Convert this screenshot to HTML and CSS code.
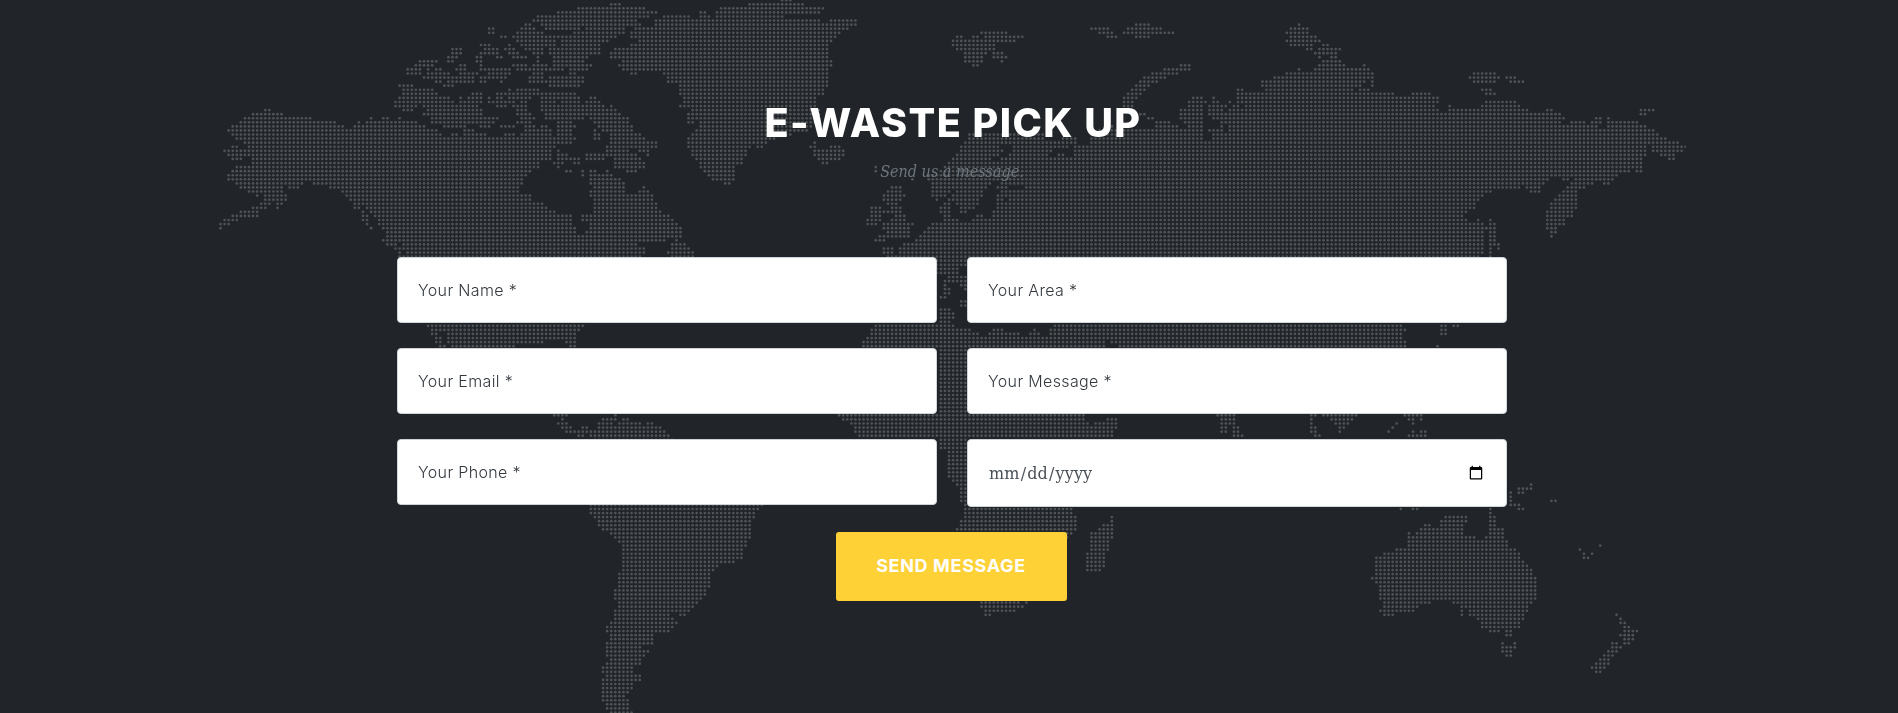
FILE: index.html
```html
<!DOCTYPE html>
<html lang="en">
<head>
<meta charset="utf-8">
<title>E-Waste Pick Up</title>
<link rel="stylesheet" href="styles.css">
</head>
<body>
<section class="contact">
  <canvas class="contact-map" id="map" width="1469" height="713"></canvas>
  <div class="container">
    <h2 class="section-heading">E-WASTE PICK UP</h2>
    <h3 class="section-subheading">Send us a message.</h3>
    <form class="contact-form">
      <div class="fields">
        <input class="field" type="text" placeholder="Your Name *">
        <input class="field" type="text" placeholder="Your Area *">
        <input class="field" type="text" placeholder="Your Email *">
        <input class="field" type="text" placeholder="Your Message *">
        <input class="field" type="text" placeholder="Your Phone *">
        <input class="field field-date" type="date">
      </div>
      <button class="send" type="button">SEND MESSAGE</button>
    </form>
  </div>
</section>
<script src="map.js"></script>
</body>
</html>
```

FILE: styles.css
```css
* { box-sizing: border-box; }

body {
  margin: 0;
  background: #212529;
  color: #212529;
  font-family: Inter, "Open Sans", sans-serif;
  overflow: hidden;
}

.contact {
  position: relative;
  height: 713px;
  padding: 96px 0 0 6px;
  background: #212529;
  overflow: hidden;
}

.contact-map {
  position: absolute;
  left: 217px;
  top: 0;
}

.container {
  position: relative;
  width: 1110px;
  margin: 0 auto;
  text-align: center;
}

.section-heading {
  margin: 0;
  padding: 3px 0 0 2px;
  font-size: 39.5px;
  line-height: 48px;
  font-weight: 800;
  letter-spacing: 1.5px;
  white-space: nowrap;
  color: #fff;
}

.section-subheading {
  margin: 13px 0 0;
  font-family: "DejaVu Serif Condensed", "DejaVu Serif", serif;
  font-size: 16px;
  line-height: 24px;
  font-style: italic;
  font-weight: 400;
  color: #6c757d;
}

.contact-form {
  display: flex;
  flex-direction: column;
  align-items: center;
  margin-top: 73px;
}

.fields {
  display: grid;
  grid-template-columns: 540px 540px;
  column-gap: 30px;
  row-gap: 25px;
  align-items: start;
  width: 1110px;
}

.field {
  width: 100%;
  height: 66px;
  padding: 20px;
  border: 1px solid #ced4da;
  border-radius: 4px;
  background: #fff;
  color: #495057;
  font-family: Inter, "Open Sans", sans-serif;
  font-size: 16px;
  font-weight: 300;
  letter-spacing: 0.35px;
}

.field::placeholder { color: #32383e; opacity: 1; }

.field-date {
  height: 68px;
  font-family: "DejaVu Serif", serif;
  font-weight: 400;
  letter-spacing: 0.15px;
}

.send {
  width: 231px;
  height: 69px;
  margin: 25px 2px 0 0;
  padding: 0 0 2px;
  border: 0;
  border-radius: 3px;
  background: #fed136;
  color: #fff;
  font-family: Inter, "Open Sans", sans-serif;
  font-size: 18px;
  font-weight: 700;
  letter-spacing: 0.65px;
}
```

FILE: map.js
```js
// Dotted world map. Every sheet lists land runs as "y:start-end,start-end",
// in thirds of a pixel from the sheet's own origin; a run covers the dots
// of the nearest grid row.
var sheets = [
  { x: 200, y: 0, sy: 3, rows: `
24:1135-1200;37:1075-1200;49:1014-1200;61:1002-1200;73:978-990,1026-1200;86:965-1002,1038-1140,1160-1200
98:953-1026,1124-1200;110:904-916,941-1200;122:953-1063,1087-1200;134:844-868,929,965-1063,1100-1200
86:868-880;98:868-880
147:758-782,856-892,917-941,978-1026,1050-1200;159:758-782,844-892,929-953,1002-1026,1050-1200
171:746-770,832-844,892-904,941-978,1014,1063-1160;183:660-709,746-758,832-844,1014,1063-1150
195:648-697,782-794,844,941-978,1002-1038,1063-1172;208:624-660,685,709-721,770-794,844-929,953-1087,1112-1160
220:624-660,685-746,782-831,868-929,1002-1026,1112-1124;232:672-746,758-819,844-856,868-916,990-1026,1050-1148
244:709-721,746-819,844-856,904,990-1148;256:599-636,733-758,1050-1136;269:611-697,929,953-1014
281:611-709,819-844,892-941,953-1014,1026-1124;293:599-746,782,807-844,868,892-904,929-941,953-990,1026-1136,1172-1184
305:587-758,782-844,868-941,965-978,1026-1063,1087-1136,1160-1200;317:587-648,672-831,892-916,941,953-978,1026-1200
330:195-207,611-636,685-844,953-978,1026-1200;342:160-244,672-844,953-990,1038-1200
354:135-330,514,550-562,599,697-892,965-1002,1038-1148,1184-1200;366:123-404,477,502-648,697-880,953-990,1075-1112,1184-1200
378:99-428,465-672,733-794,844-868,904-941,978-1002,1026-1038,1075-1124;391:87-709,794-819,978-1050,1075-1112,1184
403:99-721,758-770,794-856,916-941,965-1050,1075-1112;415:111-1063,1075-1124,1184-1200;427:135-1063,1075-1112
439:99-111,147-1063;452:74-123,135-1050,1075;464:87-147,160-1050,1075-1100,1160-1200
476:99-123,160-1050,1075-1087,1112-1130,1160-1200;488:160-1014,1063-1087,1124-1136;501:111-1014,1075
513:99-990,1100-1112,1148,1172-1184;525:87-978,1148,1172-1200;537:87-965,1172-1200;549:111-306,343-965,1172-1200
562:123-245,269-294,392-953,1184-1200;574:147-245,428-953,1172-1200;586:172,196-257,440-990,1172-1200
598:196-257,453-990,1184-1200;610:184-208,233-245,465-477,490-1026,1184-1200;623:160-196,233,465-477,502-1038,1190-1200
635:123-172,489,514-1063,1184-1200;647:99-172,489-502,526-1112,1148-1200;659:74-111,489-502,538-1112,1148-1200
672:62-87,502,538-1112,1172-1200;684:57-62,514,550-1124,1172-1200;696:562-1124,1160-1200;708:562-1136,1148-1200
721:550-1200;733:562-587,611-1200;745:587-599,611-1200;757:599,623-1200;769:599,611-1200` },

  { x: 560, y: 0, sy: 3, rows: `
0:666-690;12:154-178,568-727;24:56-252,483-788;37:8-288,422-434,471-776;49:8-264,312-385,422-446,471-666
61:8-227,288-776,812-886;73:8-240,288-886;86:80-190,227-862;98:44-190,215-837;110:8-166,215-825
122:20-142,240-812;134:8-105,215-800;147:8-117,166-800;159:8-117,154-800;171:8-80,154-800;183:8-68,190-812
195:8-92,178-812;208:8,56-80,190-800;220:32-44,215-227,312-800;232:8-68,324-800;244:8-68,324-800
256:8-56,361-800;269:361-788;281:8-44,361-788;293:8-56,92-105,373-764;305:8-56,80-117,373-764
317:8-129,154,361-764;330:8-166,397-776;342:8-178,385-776;354:8-68,92-203,385-776;366:8-32,105-203,385-397,422-764
378:8-44,117-215,422-752;391:8-32,129-215,410-740;403:8-32,105-117,154-240,397-690;415:105-117,154-252,391-636
427:8-32,154-288,385-617,764;439:142-203,215-288,385-568,592-605,752-764,812-837;452:142-203,240-264,397-556,764-850
464:8-20,80-129,142-227,264,397-556,764-850;476:8-32,80-129,166-240,410-544,776-837
488:8,44-56,166-252,422-544,788-800;501:166-252,422-520,947;513:20-32,68,92-105,142,203-227,434-520,947
525:68,92-154,446-520;537:92-178,458-520;549:92-190,495-507;562:105-190,252;574:92-190,240-264;586:92-276
598:105-276;610:105-288;623:117-288;635:105-300;647:8-32,68-325;659:8-32,68-337;672:8-32,92-349;684:8-32,92-361
696:8-44,92-361;708:8-56,80-361;721:8-313,349;733:8-227,337-373;745:8-252,337-385;757:8-252,325-397;769:8-240,337-397` },

  { x: 740, y: 90, sy: 3, rows: `
133:685-910;145:683-910;157:672-1005,1050-1960;169:660-770,820-915,925-980,1010-1960
182:660-780,820-915,932,1000-1960;194:648-770,808-920,955-975,1000-1960;206:635-755,783-940,957,975-1960
218:623-1960;230:610-1960;243:598-1960;255:565-1960;267:517,565-770,783-1960;280:575-750,790-1960
292:455-480,575-735,775-800,855-1960;304:443-478,575-630,650-722,783-1960;316:430-490,575-620,640-722,770-1960
328:430-480,590,625-640,650-710,770-785,808-1960;341:443-468,610-630,650-710,770-1960
353:393-420,455-480,600-630,660-700,770-1960;365:393-432,443-480,600-625,660-680,760-1960
378:393-420,468-493,610-625,710-730,758-1960;390:381-420,455-493,610-655,697-1960;402:381-410,430-517,575-1960
414:430-505,560-1960;427:443-505,550-1960;439:418-505,538-1960;451:405-432,530-1960;463:487-1960
476:432-460,475-1960;488:432-460,475-1960;500:445-1960` },

  { x: 930, y: 0, sy: 2.958, rows: `
72:615-660,1105;84:483-537,590-697,1080-1135;96:154-230,507-550,581-733,1068-1135
108:80-95,130-142,166-278,530-558,617-660,1080-1160;120:68-255,1068-1170;132:68-190,1080-1147,1178-1195
144:80-190,1130-1147,1165-1230;156:105-166,190-218,1155-1220;168:105-154,190-230,1168,1205-1218
180:105-154,215,1180-1230;192:130-142,752-780,1165-1243,1300;204:703-780,1105,1155-1318;216:665-740,1068-1330
228:642-710,1031-1330;240:628-682,995-1300,1325;252:615-655,995-1290,1325;264:605-642,922-935,1007-1270,1290-1315
276:593-630,922-1390;288:581-618,788-820,850,922-1410;300:581-605,776-830,850-862,898,922-1410
312:581-605,776-820,838-886,910-925,947-1410;324:590-610,752-820,838-875,898-1410;336:752-820,838-1410
964:375-1410;976:360-1410;988:360-1410;1000:25-1410;1012:25-525,550-1410;1024:25-525,565-1410
1230:862-915,1142-1155,1180-1280;1242:874-910,1142,1203-1265;1253:874-910,1142,1215-1255,1398
1265:874-886,910-925,1142-1155,1227-1240,1386;1277:874-886,910-922,1142-1155,1227,1375;1289:910-935,1155-1168` },

  { x: 1060, y: 0, sy: 3, rows: `
342:240-250,360-430,455-1020;354:265-275,360-430,455-1020;366:285-330,372-430,480-1020
378:150-160,285-350,385-430,480-490,505-1020;391:120-430,445-490,505-1020;403:90-430,455-1020
415:5-45,90-430,455-1020;427:5-45,90-415,445-1020;439:5-20,54-1020` },

  { x: 1380, y: 0, sy: 3, rows: `
220:280-342;232:268-355,378-404;244:280-342,390-428;269:305-330;281:0-40,98-150,318-342;293:0-172
305:0-172,318-404;317:0-160,208,305-416;330:0-172,208-440,500-515,782-820;342:0-540,782-794
354:0-550,648-660,685;366:0-540,575-610,635-660,685-770;378:0-648,685-795;391:0-820;403:0-832;415:0-856;427:0-893
439:0-795,820-917;452:0-795,820-905;464:0-795,843-880;476:0-782,868-880;488:0-782;501:0-782;513:0-745,770-782
525:0-710;537:0-500,550-562,587-697;549:0-490,575-636,672-685;562:0-416,440-478,562-610
574:0-330,452-478,550-587;586:0-305,538-587;598:0-293,526-587;610:0-281,514-587;623:0-281,514-587
635:0-257,502-575;647:0-245,502-575;659:0-257,293,330,502-550;672:0-305,330-342,502-550;684:0-305,318-342,502-526
696:0-305,330-342,514-526;708:0-305,330-342,514;721:0-305,330-342;733:0-305,330-355;745:0-305,330,355
757:0-305,330;769:0-293,330` },

  { x: 380, y: 240, sy: 3, rows: `
257:142-610;269:154-598;281:154-172,203-585;293:166-180,203-585;305:166-180,203-490,562-585;318:178-190,215-404,574-585` },

  { x: 540, y: 400, sy: 3, rows: `
46:43-80,227;58:68,190-227,250-263;70:56-80,178-215,240-300,325-337;83:68-92,130-142,178-361
95:80-117,130-142,154-373;107:117-130,154-385;117:166-398
317:154-668;329:154-656;341:154-642;353:166-642;366:178-630;378:178-630;390:190-630;402:215-630;414:227-630
427:240-617;439:250-617;451:250-605;463:250-605;476:250-605;488:250-580;500:250-530;512:250-517;524:240-508
537:240-508;549:240-508;561:240-508;573:227-496;585:227-496;598:227-484;610:240-471;622:240-459;634:227-447
647:227-385,422-434;659:227-398;671:215-410;683:203-398;695:203-385;708:215-337;720:215-337;732:203-337
744:203-300;756:203-325;769:203-312;781:215-300;793:203-300;805:190-276;817:190-276;830:203-300;842:190-300
854:190-276;866:190-276;878:190-263;891:190-252;903:190-263;915:203-263;927:203-263;938:215-276` },

  { x: 820, y: 220, sy: 3, rows: `
122:355-440;134:355-440;147:355-415;159:355-410;171:385-440;183:373-440;195:373,425-440;208:373-385,435
220:373-385;232:361-373;244:422-440;256:422-440;269:361-385;281:361-398;293:361-398;305:361-385
317:166-400,705-900;329:154-450,520-545,642,693-900;341:154-470,508-600,630-655,690-900;354:142-900
366:130-855,885;378:130-855,895;390:361-435;402:361-435;415:361-435;427:361-435;439:361-435;451:361-435
463:361-435;476:361-435;488:361-435;500:361-435;512:361-435;524:361-435;537:361-435;549:361-435;561:361-435;573:361-435
585:56-790;598:68-790,860-890;610:92-800,825-890;622:105-885;634:105-880;647:117-880;659:361-435;671:361-435
684:361-435;696:385-435;708:385-435;720:385-435;733:385-435;745:385-435;757:385-435;769:385-435;782:398-435
794:410-435;806:422-435;818:422-435;830:422-435;843:422-435;855:435;867:435-755;879:435-755;891:435-768,875
903:422-768,875;916:422-768,850-875;928:410-768,838-875;940:745-755,814-875;952:745,814-875;964:814-862
977:814-862;989:814-862;1001:802-850;1013:802-850;1025:802-850;1037:802-850;1050:802-838
1147:484-600,620;1160:484-608;1172:496-585;1184:496-508` },

  { x: 1380, y: 230, sy: 3, rows: `
287:0-65,183-195,220-232;299:0-75,183-195;311:0-65,183-195;324:0-65;336:0-75;348:0-75,171
556:73-123;568:85-98,123;580:49,98;592:37;605:25,98,123-135;617:85-135
764:452;776:415-452;788:390,415-428;800:390;812:390,515-525;825:390-415;837:61,98-110,330,415-428;849:330` },

  { x: 1360, y: 440, sy: 3, rows: `
232:256-318,390-402;244:244-318,390-402;256:195-207,244-305,390-402;268:183-305,390-428;280:146,170-305,390-428
293:146-342,378-428;305:146-440;317:146-440,720;329:109-464,659;341:73-476,671,695;354:48-476,671-683;366:48-488
378:48-500;390:48-512;402:48-512;414:36-525;427:48-525;439:60-525;451:60-525;463:60-525;476:60-525
488:72-207,281-512;500:72-170,305-500;512:60-158,305,330-500;525:72-98,305,330-488,768;537:354-488,780
549:366-476,780-792;561:366-476,792-805;573:390-415,440-452,792-829;586:440-452,780,792-817;598:792-817
610:427,464,756-768,792-805;622:427-464,756-780;635:427-452,744-768;647:440-452,732-756;659:720-744
671:708-744;683:696-732;696:708-720` }
];

var PITCH = 4.07, X0 = 249, Y0 = 4.1, LEFT = 217;
var ctx = document.getElementById('map').getContext('2d');
var seen = {};
ctx.fillStyle = '#505356';

sheets.forEach(function (s) {
  s.rows.trim().split(/[;\n]/).forEach(function (line) {
    var parts = line.split(':');
    var row = Math.round((s.y + parts[0] / s.sy - Y0) / PITCH);
    parts[1].split(',').forEach(function (run) {
      var ends = run.split('-').map(Number);
      var a = Math.round((s.x + ends[0] / 3 - X0) / PITCH);
      var b = Math.round((s.x + ends[ends.length - 1] / 3 - X0) / PITCH);
      for (var c = a; c <= b; c++) {
        var key = row + ',' + c;
        if (seen[key]) continue;
        seen[key] = true;
        ctx.beginPath();
        ctx.arc(X0 + c * PITCH - LEFT, Y0 + row * PITCH + 0.2, 1.35, 0, 7);
        ctx.fill();
      }
    });
  });
});
```
